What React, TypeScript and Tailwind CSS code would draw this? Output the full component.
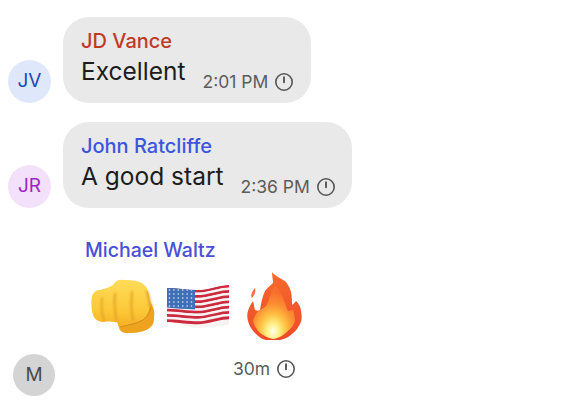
const ClockIcon = () => (
  <svg width="20" height="20" viewBox="0 0 20 20" fill="none" stroke="#555555" className="shrink-0">
    <circle cx="10" cy="10" r="8.2" strokeWidth="1.6" />
    <path d="M10 5.2v5" strokeWidth="1.9" strokeLinecap="round" />
  </svg>
);

const Avatar = ({ initials, className }: { initials: string; className: string }) => (
  <div className={`rounded-full flex items-center justify-center text-[19px] shrink-0 ${className}`}>
    {initials}
  </div>
);

const Bubble = ({
  name,
  nameColor,
  text,
  time,
  width,
}: {
  name: string;
  nameColor: string;
  text: string;
  time: string;
  width: string;
}) => (
  <div className={`bg-[#e9e9e9] rounded-[26px] h-[86px] pl-[18px] pt-[11px] ${width}`}>
    <div className={`text-[20px] leading-[26px] font-medium ${nameColor}`}>{name}</div>
    <div className="flex items-start">
      <span className="text-[24.5px] leading-[34px] text-[#1c1c1c]">{text}</span>
      <span className="text-[17.5px] leading-[24px] text-[#5c5c5c] mt-[16px] ml-[17px] mr-[6px] whitespace-nowrap">
        {time}
      </span>
      <span className="mt-[18px]">
        <ClockIcon />
      </span>
    </div>
  </div>
);

const FistEmoji = () => (
  <svg width="67" height="57" viewBox="0 0 67 57" className="shrink-0">
    <defs>
      <linearGradient id="fist" x1="0" y1="0" x2="0" y2="1">
        <stop offset="0" stopColor="#ffdc5a" />
        <stop offset="0.6" stopColor="#fcc736" />
        <stop offset="1" stopColor="#f0a51e" />
      </linearGradient>
      <filter id="soft" x="-10%" y="-10%" width="120%" height="120%">
        <feGaussianBlur stdDeviation="1.1" />
      </filter>
    </defs>
    <path
      d="M2 18C4 13 7 12 10 12C14 11 20 9 23 7C25 3 29 1 33 2C38 2 44 2 50 4C54 6 57 9 58 13C59 17 60 21 60 24C63 28 65 33 64 39C64 44 63 48 58 51C52 54 44 55 38 55C34 55 30 54 29 50C28 47 28 46 27 44C22 44 18 43 14 44C9 44 5 42 3 37C1 31 1 24 2 18Z"
      fill="url(#fist)"
    />
    <g filter="url(#soft)" fill="none" stroke="#e5a326" strokeLinecap="round">
      <path d="M12 20C11 28 12 36 14 42" strokeWidth="1.8" />
      <path d="M25 16C24 26 25 36 27 43" strokeWidth="2" />
      <path d="M42 14C41 24 41 34 43 42" strokeWidth="2" />
      <path d="M57 14C59 20 60 24 60 28" strokeWidth="2.4" />
    </g>
    <path
      d="M30 49C36 47 44 46 52 42C57 39 60 33 60 24C63 28 65 33 64 39C64 44 63 48 58 51C52 54 44 55 38 55C34 55 31 53 30 49Z"
      fill="#eea320"
    />
    <path d="M30 49C38 47 46 46 53 42C57 39 60 35 61 29" fill="none" stroke="#d18a14" strokeWidth="0.9" />
  </svg>
);

const stripeColors = ["#cc2a3e", "#f8f3f3"];

const FlagEmoji = () => (
  <svg width="62" height="46" viewBox="0 0 62 46" className="shrink-0">
    <defs>
      <clipPath id="flag-shape">
        <path d="M0 4C10 4 20 6 31 6C42 6 52 1 62 1V41C52 41 42 44 31 44C20 44 10 38 0 38Z" />
      </clipPath>
    </defs>
    <g clipPath="url(#flag-shape)">
      <rect width="62" height="46" fill="#f8f3f3" />
      {Array.from({ length: 13 }, (_, i) => {
        const y = 5.3 + i * 2.62;
        return (
          <path
            key={i}
            d={`M0 ${y}C10 ${y} 20 ${y + 2} 31 ${y + 2}C42 ${y + 2} 52 ${y - 3} 62 ${y - 3}`}
            fill="none"
            stroke={stripeColors[i % 2]}
            strokeWidth="2.9"
          />
        );
      })}
      <path d="M0 3H28V25.5C18 25 10 24.5 0 23.5Z" fill="#3f6fb8" />
      {Array.from({ length: 30 }, (_, i) => (
        <circle key={i} cx={2.5 + (i % 6) * 4.4} cy={6 + Math.floor(i / 6) * 4} r="0.8" fill="#eaf0fa" />
      ))}
    </g>
  </svg>
);

const FireEmoji = () => (
  <svg width="55" height="70" viewBox="0 0 55 70" className="shrink-0">
    <defs>
      <radialGradient id="fire-glow" cx="0.48" cy="0.86" r="0.72">
        <stop offset="0" stopColor="#fffdec" />
        <stop offset="0.2" stopColor="#fff08a" />
        <stop offset="0.42" stopColor="#ffc545" />
        <stop offset="0.7" stopColor="#fc8f32" />
        <stop offset="1" stopColor="#f86f2c" />
      </radialGradient>
      <linearGradient id="fire-outer" x1="0" y1="0" x2="0" y2="1">
        <stop offset="0" stopColor="#f76a2e" />
        <stop offset="1" stopColor="#ee4a2a" />
      </linearGradient>
    </defs>
    <path
      d="M25 0C27 3 33 6 38 9C41 12 43 16 44 20C45 25 45 29 45 33C47 32 48 30 49 29C52 32 54 35 54 39C55 44 55 48 53 52C51 56 49 59 46 61C42 65 38 67 33 68H19C14 67 11 64 8 61C4 57 2 53 1 49C0 45 0 42 1 39C2 35 4 32 6 29C7 32 7 35 8 38C10 39 12 39 13 38C14 32 15 25 18 19C20 16 23 14 26 11C26 8 25 4 25 0Z"
      fill="url(#fire-outer)"
    />
    <path
      d="M28 13C31 17 34 21 36 26C38 30 39 35 41 39C43 39 45 38 46 38C47 41 48 45 48 49C47 53 44 56 41 59C37 63 32 66 26 67C21 66 17 64 13 61C9 57 7 53 6 49C7 45 9 42 11 39C14 37 17 36 19 34C21 31 22 27 23 24C24 20 27 17 28 13Z"
      fill="url(#fire-glow)"
    />
    <path d="M8 16C9 19 8 23 5 26C3 24 5 19 8 16Z" fill="#f4714a" />
  </svg>
);

export default function App() {
  return (
    <div className="w-[588px] h-[410px] bg-white overflow-hidden font-['Inter',sans-serif]">
      <div className="flex items-end gap-3 pl-2 pt-[17px]">
        <Avatar initials="JV" className="w-[43px] h-[43px] bg-[#dfe8fb] text-[#2049b8]" />
        <Bubble
          name="JD Vance"
          nameColor="text-[#bf3a27]"
          text="Excellent"
          time="2:01 PM"
          width="w-[248px]"
        />
      </div>

      <div className="flex items-end gap-3 pl-2 mt-[19px]">
        <Avatar initials="JR" className="w-[43px] h-[43px] bg-[#f3e0fb] text-[#9a27c4]" />
        <Bubble
          name="John Ratcliffe"
          nameColor="text-[#3b55e0]"
          text="A good start"
          time="2:36 PM"
          width="w-[289px]"
        />
      </div>

      <div className="flex items-end pl-[13px] mt-[29px]">
        <Avatar initials="M" className="w-[42px] h-[42px] bg-[#d4d4d4] text-[#4a4a4a]" />
        <div className="ml-[30px] flex flex-col">
          <div className="text-[19.5px] leading-[26px] font-medium text-[#4a4fd8]">Michael Waltz</div>
          <div className="flex items-end mt-[9px] h-[70px]">
            <div className="mb-[7px] ml-[5px]">
              <FistEmoji />
            </div>
            <div className="mb-[12px] ml-[10px]">
              <FlagEmoji />
            </div>
            <div className="ml-[18px]">
              <FireEmoji />
            </div>
          </div>
          <div className="flex items-center gap-[6px] mt-[15px] mb-[15px] ml-[148px]">
            <span className="text-[17.5px] leading-[24px] text-[#5c5c5c]">30m</span>
            <ClockIcon />
          </div>
        </div>
      </div>
    </div>
  );
}
